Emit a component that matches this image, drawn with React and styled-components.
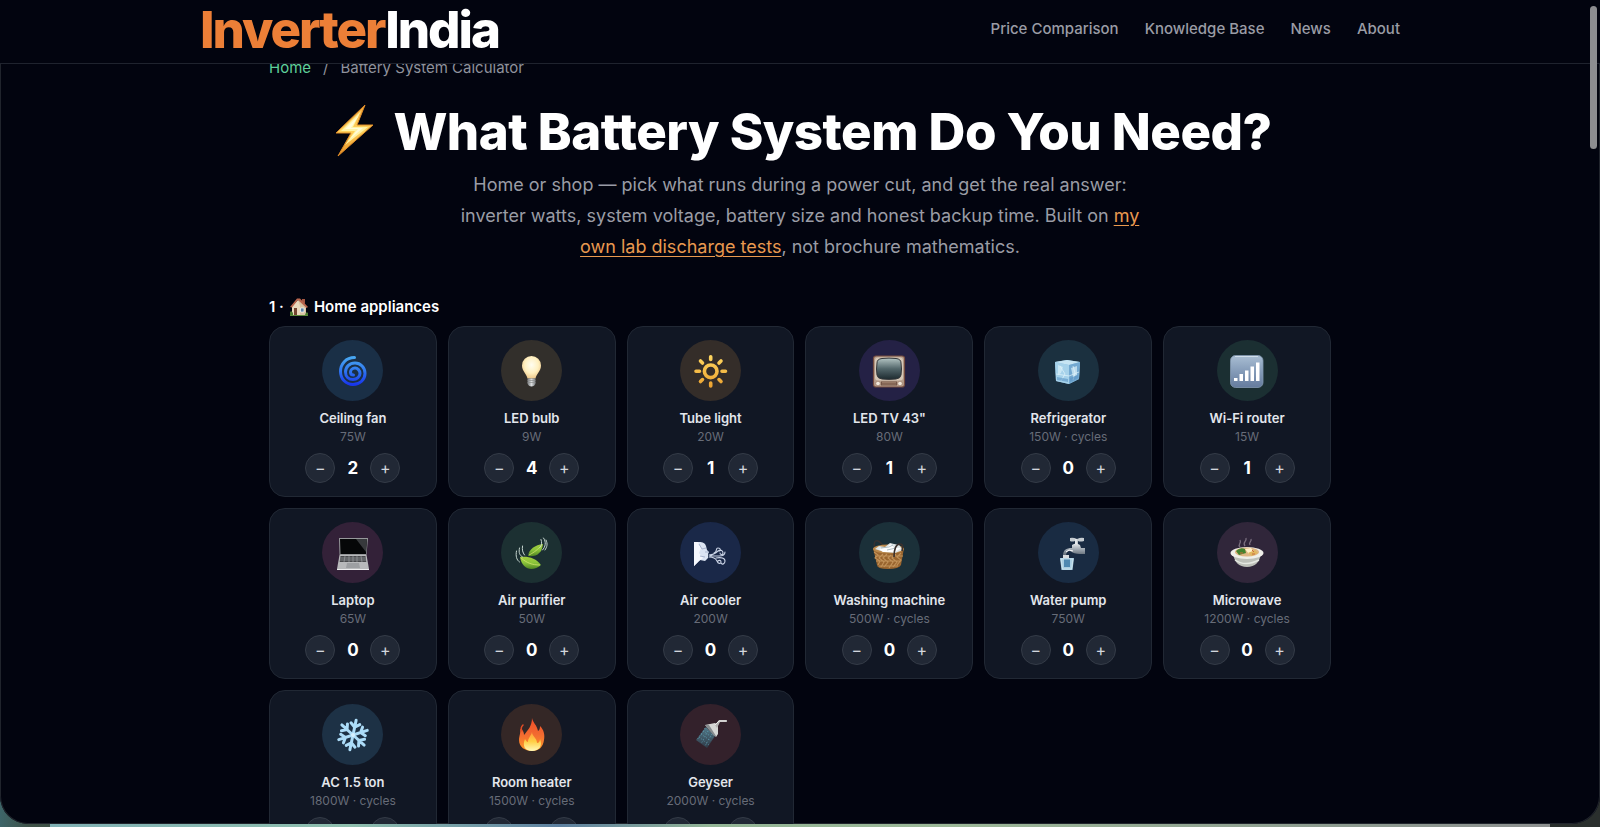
import React, { useState } from "react";
import styled, { createGlobalStyle } from "styled-components";

const GlobalStyle = createGlobalStyle`
  * { box-sizing: border-box; }
  body {
    margin: 0;
    background: #02040f;
    color: #fff;
    font-family: Inter, "Liberation Sans", sans-serif;
    -webkit-font-smoothing: antialiased;
  }
`;

const Desktop = styled.div`
  height: 100vh;
  padding-bottom: 3px;
  background:
    linear-gradient(90deg, #7fb0b4 0%, #8fbfae 20%, #5d80a0 34%, #93b596 44%, #9cb898 60%, #8d9c90 85%, #8d9090 100%)
      center bottom / calc(100% - 100px) 3px no-repeat,
    linear-gradient(90deg, #3d6468 0%, #3f5248 30px, #23302c 50%, #2a2f2d 100%);
`;

const BrowserWindow = styled.div`
  position: relative;
  height: 100%;
  overflow: hidden;
  background: #02040f;
  border-radius: 0 0 28px 28px;
  box-shadow: inset 0 0 0 1px #20242c;
`;

const Header = styled.header`
  position: absolute;
  inset: 0 0 auto 0;
  height: 64px;
  background: #02040f;
  border-bottom: 1px solid #1f232e;
`;

const HeaderInner = styled.div`
  display: flex;
  align-items: center;
  justify-content: space-between;
  max-width: 1200px;
  height: 100%;
  margin: 0 auto;
  padding-bottom: 4px;
`;

const Logo = styled.a`
  color: #fff;
  font-size: 51px;
  line-height: 60px;
  font-weight: 800;
  letter-spacing: -0.04em;
  text-decoration: none;
`;

const LogoAccent = styled.span`
  color: #ec7f37;
`;

const Nav = styled.nav`
  display: flex;
  gap: 26px;
  padding-bottom: 2px;
`;

const NavLink = styled.a`
  color: #9a9ca5;
  font-size: 15px;
  line-height: 20px;
  font-weight: 500;
  text-decoration: none;
`;

const Scrollbar = styled.div`
  position: absolute;
  top: 6px;
  right: 3px;
  width: 7px;
  height: 143px;
  border-radius: 4px;
  background: #8c8d90;
`;

const Main = styled.main`
  max-width: 1062px;
  margin: 0 auto;
  padding-top: 58px;
`;

const Breadcrumb = styled.nav`
  display: flex;
  gap: 12px;
  color: #8f929c;
  font-size: 15px;
  line-height: 20px;
`;

const CrumbLink = styled.a`
  color: #5fd09a;
  text-decoration: none;
`;

const Hero = styled.section`
  display: flex;
  flex-direction: column;
  align-items: center;
  padding-top: 24px;
  text-align: center;
`;

const Title = styled.h1`
  display: flex;
  align-items: center;
  gap: 14px;
  margin: 0;
  font-size: 51px;
  line-height: 60px;
  font-weight: 800;
  letter-spacing: -0.01em;
  white-space: nowrap;
`;

const Intro = styled.p`
  max-width: 700px;
  margin: 7px 0 0;
  color: #9a9ca5;
  font-size: 18px;
  line-height: 31px;
`;

const IntroLink = styled.a`
  color: #e9994f;
  text-decoration: underline;
  text-underline-offset: 3px;
`;

const SectionTitle = styled.h2`
  display: flex;
  align-items: center;
  gap: 5px;
  margin: 35px 0 9px;
  font-size: 15px;
  line-height: 20px;
  font-weight: 600;
`;

const Grid = styled.ul`
  display: grid;
  grid-template-columns: repeat(6, 1fr);
  gap: 11px;
  margin: 0;
  padding: 0;
  list-style: none;
`;

const Card = styled.li`
  display: flex;
  flex-direction: column;
  align-items: center;
  padding: 13px 8px;
  background: #111724;
  border: 1px solid #212834;
  border-radius: 16px;
`;

const IconDisc = styled.div`
  display: flex;
  align-items: center;
  justify-content: center;
  width: 61px;
  height: 61px;
  border-radius: 50%;
  background: ${(p) => p.$tint};
`;

const Name = styled.h3`
  margin: 9px 0 3px;
  color: #e3e6ec;
  font-size: 13px;
  line-height: 17px;
  font-weight: 600;
`;

const Watts = styled.p`
  margin: 0 0 9px;
  color: #676c78;
  font-size: 12px;
  line-height: 14px;
`;

const Stepper = styled.div`
  display: flex;
  align-items: center;
`;

const StepButton = styled.button`
  width: 30px;
  height: 30px;
  padding: 0;
  color: #d2d6dd;
  background: #212835;
  border: 1px solid #343b47;
  border-radius: 50%;
  font-family: inherit;
  font-size: 16px;
  line-height: 28px;
  cursor: pointer;
`;

const Quantity = styled.output`
  width: 35px;
  color: #fff;
  font-size: 17px;
  line-height: 24px;
  font-weight: 700;
  text-align: center;
`;

function Icon({ children }) {
  return (
    <svg width="34" height="34" viewBox="0 0 34 34" fill="none" aria-hidden="true">
      {children}
    </svg>
  );
}

function Grad({ id, from, mid, to, horizontal }) {
  return (
    <linearGradient id={id} x1="0" y1="0" x2={horizontal ? 1 : 0} y2={horizontal ? 0 : 1}>
      <stop offset="0" stopColor={from} />
      {mid && <stop offset="0.5" stopColor={mid} />}
      <stop offset="1" stopColor={to} />
    </linearGradient>
  );
}

const BoltIcon = () => (
  <svg width="51" height="58" viewBox="0 0 51 58" fill="none" aria-hidden="true">
    <defs><Grad id="bolt" from="#f5a83a" mid="#ffd45e" to="#e98f22" /></defs>
    <path d="M37 2 8 30H23L10 53 45 22H29Z" fill="url(#bolt)" stroke="#dd8a27" strokeWidth="1" strokeLinejoin="round" />
    <path d="M33 8 13 28H27L17 42 40 24H25Z" fill="#fff3a6" />
    <path d="M31 12 17 26H30L22 36 35 25H23Z" fill="#fffbd9" />
  </svg>
);

const HouseIcon = () => (
  <svg width="20" height="20" viewBox="0 0 20 20" fill="none" aria-hidden="true">
    <path d="M1 17h18v2H1z" fill="#5c8a3b" />
    <path d="M3 9 9 3l8 6v9H3z" fill="#ead9bd" />
    <path d="M9 3l8 6v9h-6V9z" fill="#d8c4a4" />
    <path d="M13 2h3v5l-3-2z" fill="#a55742" />
    <path d="M8 1.5h3L19 10l-1.500 1-8.500-8L3 10.500 1 10z" fill="#b9664e" />
    <path d="M5 11h3v7H5z" fill="#744631" />
    <path d="M11.500 11h3.500v4h-3.500z" fill="#5c83a5" stroke="#fff" strokeWidth=".7" />
    <path d="M1 15q1.500-2 3 1v2H1zM16 18q1-4 3-2v2z" fill="#4b7e30" />
  </svg>
);

const FanIcon = () => (
  <Icon>
    <defs><Grad id="fan" from="#48a7f2" mid="#2f76ef" to="#1836ed" /></defs>
    <path
      d="M18.500 3.500C10 3.500 4.500 10 4.500 17.500S10 30.500 17 30.500 29 25.500 29 19.500 24.500 9 19 9 9.500 13 9.500 18 13 25.500 17 25.500s7-3 7-6S21.500 14 19 14s-4.500 2-4.500 4 1.500 3 3 3"
      stroke="url(#fan)" strokeWidth="3" strokeLinecap="round"
    />
  </Icon>
);

const BulbIcon = () => (
  <Icon>
    <defs>
      <radialGradient id="bulb" cx=".5" cy=".4" r=".6">
        <stop offset="0" stopColor="#fffdf0" /><stop offset=".6" stopColor="#fff0c0" /><stop offset="1" stopColor="#eec98c" />
      </radialGradient>
      <Grad id="base" from="#777b7e" mid="#d9dcdd" to="#75797c" horizontal />
    </defs>
    <path d="M16.500 2a9.500 9.500 0 0 0-9.500 9.500c0 5.500 4.500 8 5.500 13h8c1-5 5.500-7.500 5.500-13A9.500 9.500 0 0 0 16.500 2Z" fill="url(#bulb)" />
    <path d="M12.500 24.500h8v5q-1 3-4 3t-4-3z" fill="url(#base)" />
    <path d="M12.500 26.500h8M12.500 28.500h8" stroke="#8c8e8d" strokeWidth=".7" />
  </Icon>
);

const SunIcon = () => (
  <Icon>
    <defs>
      <linearGradient id="sun" gradientUnits="userSpaceOnUse" x1="0" y1="1" x2="0" y2="34">
        <stop stopColor="#ffd761" /><stop offset="1" stopColor="#eba02e" />
      </linearGradient>
    </defs>
    <g stroke="url(#sun)" strokeWidth="3.600" strokeLinecap="round">
      <circle cx="16.700" cy="17.300" r="6.300" />
      <path d="M16.700 2.700V5.500M16.710 29V32M2 17.300H5.500M28 17.310H31.500M6.500 7 8.500 9M25 25.600 27 27.600M27 7 25 9M8.500 25.600 6.500 27.600" />
    </g>
  </Icon>
);

const TvIcon = () => (
  <Icon>
    <defs><Grad id="tv" from="#b4c5c4" mid="#52666a" to="#1d2a2f" /></defs>
    <rect x="1.500" y="2" width="31" height="31" rx="2.500" fill="#b79f8c" stroke="#754c40" strokeWidth="1.200" />
    <rect x="3" y="3.500" width="28" height="23" rx="3" fill="#d5c7b7" />
    <path d="M5 9q0-4 5-4.500 7-.8 14 0 5 .5 5 4.500 1 6 0 12-.5 3.500-5 4-7 .8-14 0-4.500-.5-5-4Q4 15 5 9Z" fill="url(#tv)" stroke="#34373a" />
    <path d="M9 27.500h16v4H9z" fill="#735547" />
    <path d="M10 28.500h14M10 30h14" stroke="#a68a74" strokeWidth=".7" />
    <circle cx="6" cy="29.500" r="2.300" fill="#f0e8db" stroke="#8f6a58" strokeWidth=".6" />
    <circle cx="28" cy="29.500" r="2.300" fill="#f0e8db" stroke="#8f6a58" strokeWidth=".6" />
  </Icon>
);

const IceIcon = () => (
  <Icon>
    <path d="m4 8 12-2 13 2-1 17-10 5L5 27Z" fill="#8ec0e0" />
    <path d="m4 8 12-2 13 2-11 3z" fill="#c7e5f3" />
    <path d="M18 11 29 8l-1 17-10 5z" fill="#73a9d1" />
    <path d="m4 8 14 3v19L5 27z" fill="#a6d2ea" />
    <path d="m7 11 5 2-2 6-3 2zM20 14l6-2v9l-4 2z" fill="#d4eef7" opacity=".75" />
    <path d="m5 20 13 2 10-4M9 12l5 8-4 7M22 12l2 7-2 7" stroke="#e1f4fb" strokeWidth="1" opacity=".7" />
    <path d="m6 23 11 2v3L6 26zM19 24l8-3v3l-8 4z" fill="#5a94c5" opacity=".6" />
  </Icon>
);

const SignalIcon = () => (
  <Icon>
    <defs><Grad id="signal" from="#a9bed3" mid="#849bb8" to="#657b9d" /></defs>
    <rect x=".5" y="1.500" width="32.500" height="32" rx="5" fill="url(#signal)" stroke="#8297ae" strokeWidth=".8" />
    <path d="M5 2.500h23" stroke="#d0deea" strokeWidth="1" />
    <path d="M4 24h3.500v3H4zM9.500 20H13v7H9.500zM15 16.500h3.500V27H15zM20.500 12.500H24V27h-3.500zM26 8.500h3.500V27H26z" fill="#fff" />
  </Icon>
);

const LaptopIcon = () => (
  <Icon>
    <path d="M3 2h29l-1.500 17h-27z" fill="#96989a" />
    <path d="M4 3h27l-1 15H4.500z" fill="#060708" />
    <path d="m20 3 11 0-1 13z" fill="#37393c" />
    <path d="M3.500 19h27L33 33H1z" fill="#b8b9bb" />
    <path d="M4.500 20h25l.8 6H3.700z" fill="#48494c" />
    <path d="M4.200 22h25.500M4 24h26M9 20l-1 6M13 20v6M17 20v6M21 20v6M25 20l1 6" stroke="#9b9da0" strokeWidth=".7" />
    <path d="M11 27h12l1 5H10z" fill="#9d9fa2" />
    <path d="M1 33h32v1.500H1z" fill="#ededee" />
  </Icon>
);

const LeafIcon = () => (
  <Icon>
    <defs><Grad id="leaf" from="#a4ce3f" mid="#8ac43a" to="#4f8423" /></defs>
    <path d="M13 20c1-7 7-11 15-12-1 9-6 13-15 12Z" fill="url(#leaf)" />
    <path d="M5 21c8-1 16 1 21 8-8 7-19 5-21-8Z" fill="url(#leaf)" />
    <path d="M14 19c6-3 9-6 12-9M6 22c6 5 11 7 19 7" stroke="#d1e46d" strokeWidth=".8" />
    <path d="M1.500 15c-1 5 0 9 3 11M4.500 12c-1 5 0 7 3 9M7.500 10c-.5 4 0 6 2 9M28.500 2c3 4 2 9-1 12M31 4c2 4 1 7-1 10M26 3.500c1 3 1 6-1 8" stroke="#c6d6d0" strokeWidth="1" strokeLinecap="round" />
  </Icon>
);

const WindIcon = () => (
  <Icon>
    <path d="M0 6h5c4 0 6 1 7 4l1 4 2 2-1 2v4l-3 3-5-1-6 6z" fill="#dce4f3" />
    <path d="M0 6h4l3 6-2 5 4 5-4 3-5 5z" fill="#f6f8fe" />
    <path d="m5 8 3 5 4-1M6 20l5 1M11 16l3 0" stroke="#a9b5d0" strokeWidth="1" />
    <path d="M15 19c5 0 7-2 9-4 3-2 5 0 5 2s-3 2-3 0M16 20h9c4 0 6-1 6-4M15 21c5 0 7 2 8 4 1 3 4 3 4 1s-2-2-3-1M20 17c4-1 1-5 4-5s3 3 1 3M22 22c5-1 9 0 9 3s-3 4-4 2" stroke="#cbd4e6" strokeWidth="1.100" strokeLinecap="round" />
  </Icon>
);

const BasketIcon = () => (
  <Icon>
    <path d="M3 12C1 7 3 4 6 5c3 1 5 5 6 8" stroke="#353131" strokeWidth="1.500" />
    <path d="m1 12 31 0-3 17q-2 4-13 4T5 29z" fill="#99652f" />
    <path d="m2 16 4 3-3 3 5 3-2 4M11 18l-4 4 5 4-3 5M15 18l-4 4 5 4-4 5M19 19l-3 3 5 4-4 6M24 18l-4 4 5 4-4 5M29 17l-4 4 4 3-4 5M3 20h28M4 25h25M7 30h19" stroke="#c2935a" strokeWidth="1.100" />
    <ellipse cx="16.500" cy="13" rx="15.500" ry="4.500" fill="#b9884c" />
    <path d="m3 13 4-3 6 1 5-4 4 1 5 1 4 5-8 3-11-1z" fill="#dfe5e6" />
    <path d="m7 13 8-2 4-3 3 4 7 0-6 4H11z" fill="#fff" />
    <path d="m9 12 8-1 4-2M15 14l9-2" stroke="#9daeb5" strokeWidth=".8" />
    <path d="M22 21c0-8 2-13 6-13 3 0 3 3 2 7" stroke="#3a302c" strokeWidth="1.700" />
  </Icon>
);

const TapIcon = () => (
  <Icon>
    <defs><Grad id="tap" from="#e7eaed" mid="#9ba4ad" to="#59636d" /></defs>
    <path d="M19 2q3-1 7 1 4-2 7-1v3q-4 1-6 0v4h-3V5q-3 1-5 0z" fill="#c5ccd1" />
    <path d="M21 9q4-3 8 0l1 3h4v6h-5q-6 0-10-3-4 0-4 5h-3c0-6 3-8 9-8z" fill="url(#tap)" />
    <path d="m15 16 3-2 4 1M25 3v5" stroke="#fff" strokeWidth="1" />
    <path d="M12 19h6v3h-6z" fill="#d8dcde" />
    <path d="M9 22h14l-1.500 12h-11z" fill="#a9cee2" />
    <path d="M13 23h6v8h-6z" fill="#4f89b1" />
    <path d="M10 23h12l-1.500 10h-9z" stroke="#d4e8ef" strokeWidth=".8" />
  </Icon>
);

const BowlIcon = () => (
  <Icon>
    <path d="M10 11c-3-3 2-3 0-7M15 10c-3-4 2-4 1-8M20 9c-2-3 2-3 1-6" stroke="#9a8f9c" strokeWidth="1.300" opacity=".7" />
    <path d="M3 17h28c-1 9-6 14-14 14S4 26 3 17Z" fill="#bdc0b9" />
    <ellipse cx="17" cy="17" rx="16.500" ry="6" fill="#efefe9" />
    <ellipse cx="17" cy="16" rx="12" ry="4.500" fill="#dfb684" />
    <path d="M6 15q4-4 9-2l1 4-7 2z" fill="#44832e" />
    <path d="m15 13 6-1 3 4-5 2z" fill="#fff0c8" />
    <path d="m18 17 7-3 3 3-6 3z" fill="#e1b75e" />
    <path d="M10 17h3M22 14l2 2M22 18l3 0" stroke="#c96a3d" strokeWidth="1" />
    <path d="M5 24q10 7 24 0" stroke="#e5e8e2" strokeWidth="1.500" />
  </Icon>
);

const SnowIcon = () => (
  <Icon>
    <g transform="rotate(12 17 17)" fill="#a9daf8">
      {[0, 60, 120, 180, 240, 300].map((a) => (
        <g key={a} transform={`rotate(${a} 17 17)`} stroke="#acdcf8" strokeWidth="3" strokeLinecap="round">
          <path d="M17 17V2M17 9 12.500 5.500M17 9 21.500 5.500" />
        </g>
      ))}
      <circle cx="17" cy="17" r="2" fill="#d5f0ff" />
    </g>
  </Icon>
);

const FireIcon = () => (
  <Icon>
    <defs>
      <Grad id="fire" from="#ef4c28" mid="#f26a30" to="#ff9b28" />
      <Grad id="flame" from="#ff9a3a" mid="#ffcf45" to="#fff9ba" />
    </defs>
    <path d="M17 0c1 5 5 7 6 13 2-1 2-4 2-5 4 4 5 9 4 14-1 7-5 11-12 11S4 29 4 22c0-4 2-7 1-11 3 1 4 3 4 6 4-5 8-9 8-17Z" fill="url(#fire)" />
    <path d="M17 14c0 4 5 6 5 11 2 0 3-2 3-4 3 7-1 12-8 12S7 28 10 21c1 2 2 3 3 3 0-4 3-6 4-10Z" fill="url(#flame)" />
    <path d="M8 7q-3 3-1 6" stroke="#e14c25" strokeWidth="1.500" strokeLinecap="round" />
  </Icon>
);

const ShowerIcon = () => (
  <Icon>
    <defs><Grad id="water" from="#5f9fb2" to="#2c4452" /></defs>
    <path d="m12 9 9 9-8 12-11-8z" fill="url(#water)" opacity=".7" />
    <path d="m9 13 10 7M7 16l10 7M5 19l10 8M11 10 3 22M14 13 7 26M18 16l-7 12" stroke="#62a3b8" strokeWidth="1" strokeDasharray="1 2" opacity=".8" />
    <path d="m11 7 10-2 3 2 0 9-2 3z" fill="#d6d7d5" />
    <path d="m11 7 9 11 2 0-7-11z" fill="#858b8e" />
    <path d="m21 7 4-5h8v2h-7l-3 6z" fill="#b6b5b4" />
    <path d="m21 7 4-4h7" stroke="#eeeeec" strokeWidth="1" />
  </Icon>
);

const APPLIANCES = [
  { name: "Ceiling fan", watts: "75W", qty: 2, tint: "#1a2f46", Art: FanIcon },
  { name: "LED bulb", watts: "9W", qty: 4, tint: "#322f2b", Art: BulbIcon },
  { name: "Tube light", watts: "20W", qty: 1, tint: "#342d29", Art: SunIcon },
  { name: 'LED TV 43"', watts: "80W", qty: 1, tint: "#242145", Art: TvIcon },
  { name: "Refrigerator", watts: "150W · cycles", qty: 0, tint: "#1b303f", Art: IceIcon },
  { name: "Wi-Fi router", watts: "15W", qty: 1, tint: "#1b2f32", Art: SignalIcon },
  { name: "Laptop", watts: "65W", qty: 0, tint: "#332138", Art: LaptopIcon },
  { name: "Air purifier", watts: "50W", qty: 0, tint: "#1c3032", Art: LeafIcon },
  { name: "Air cooler", watts: "200W", qty: 0, tint: "#1a2848", Art: WindIcon },
  { name: "Washing machine", watts: "500W · cycles", qty: 0, tint: "#1b3039", Art: BasketIcon },
  { name: "Water pump", watts: "750W", qty: 0, tint: "#192b42", Art: TapIcon },
  { name: "Microwave", watts: "1200W · cycles", qty: 0, tint: "#30263a", Art: BowlIcon },
  { name: "AC 1.5 ton", watts: "1800W · cycles", qty: 0, tint: "#1d3145", Art: SnowIcon },
  { name: "Room heater", watts: "1500W · cycles", qty: 0, tint: "#342726", Art: FireIcon },
  { name: "Geyser", watts: "2000W · cycles", qty: 0, tint: "#33212b", Art: ShowerIcon },
];

function ApplianceCard({ name, watts, qty, tint, Art }) {
  const [count, setCount] = useState(qty);
  return (
    <Card>
      <IconDisc $tint={tint}><Art /></IconDisc>
      <Name>{name}</Name>
      <Watts>{watts}</Watts>
      <Stepper>
        <StepButton type="button" aria-label={`Remove one ${name}`} onClick={() => setCount(Math.max(0, count - 1))}>−</StepButton>
        <Quantity>{count}</Quantity>
        <StepButton type="button" aria-label={`Add one ${name}`} onClick={() => setCount(count + 1)}>+</StepButton>
      </Stepper>
    </Card>
  );
}

export default function App() {
  return (
    <Desktop>
      <GlobalStyle />
      <BrowserWindow>
        <Main>
          <Breadcrumb aria-label="Breadcrumb">
            <CrumbLink href="#home">Home</CrumbLink>
            <span>/</span>
            <span>Battery System Calculator</span>
          </Breadcrumb>
          <Hero>
            <Title><BoltIcon />What Battery System Do You Need?</Title>
            <Intro>
              Home or shop — pick what runs during a power cut, and get the real answer: inverter watts,
              system voltage, battery size and honest backup time. Built on{" "}
              <IntroLink href="#lab-tests">my own lab discharge tests</IntroLink>, not brochure mathematics.
            </Intro>
          </Hero>
          <SectionTitle>1 · <HouseIcon /> Home appliances</SectionTitle>
          <Grid>
            {APPLIANCES.map((item) => <ApplianceCard key={item.name} {...item} />)}
          </Grid>
        </Main>
        <Header>
          <HeaderInner>
            <Logo href="#home"><LogoAccent>Inverter</LogoAccent>India</Logo>
            <Nav aria-label="Main">
              <NavLink href="#prices">Price Comparison</NavLink>
              <NavLink href="#knowledge">Knowledge Base</NavLink>
              <NavLink href="#news">News</NavLink>
              <NavLink href="#about">About</NavLink>
            </Nav>
          </HeaderInner>
        </Header>
        <Scrollbar />
      </BrowserWindow>
    </Desktop>
  );
}
